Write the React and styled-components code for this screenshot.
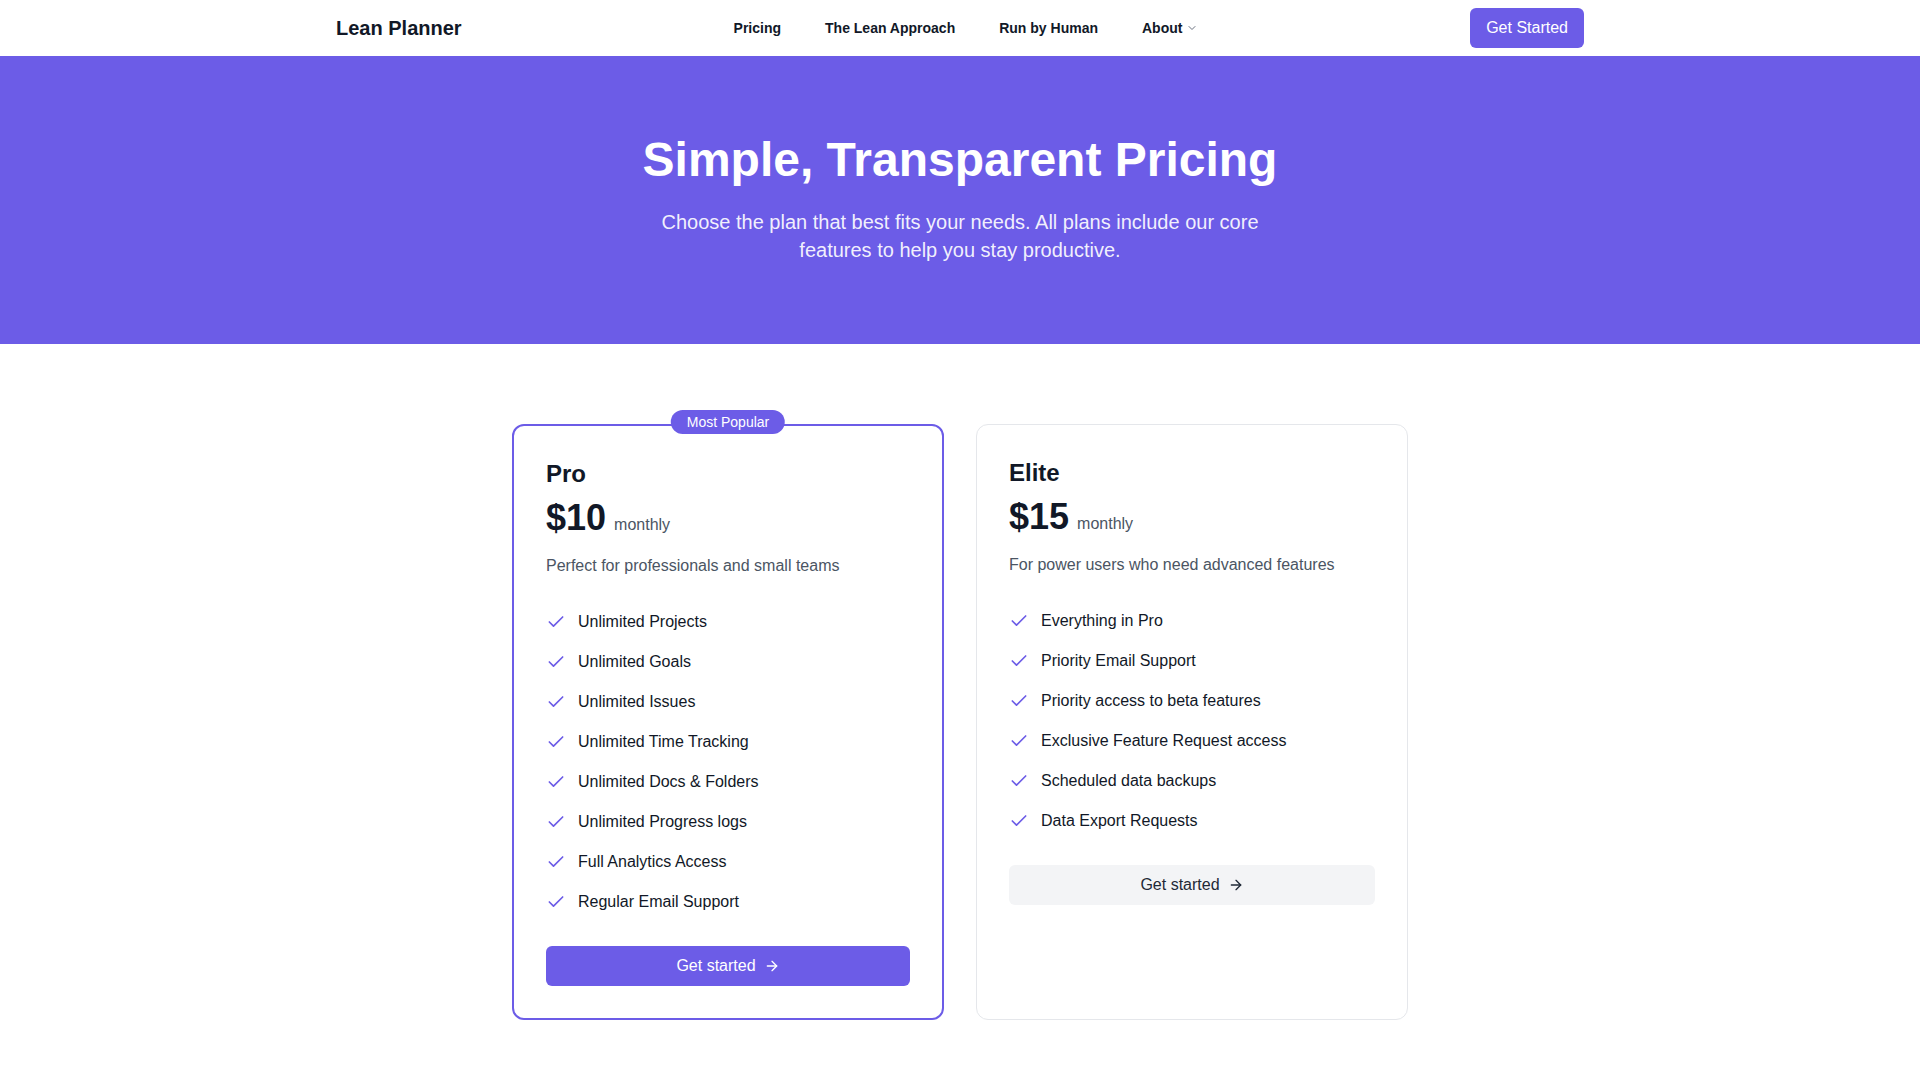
import React from 'react';
import styled, { createGlobalStyle } from 'styled-components';
import { Check, ArrowRight, ChevronDown } from 'lucide-react';

const PURPLE = '#6c5ce7';

const GlobalStyle = createGlobalStyle`
  body {
    margin: 0;
    font-family: "Liberation Sans", Arial, sans-serif;
    background: #fff;
    color: #111827;
  }
  * {
    box-sizing: border-box;
  }
`;

const Nav = styled.nav`
  background: #fff;
  height: 56px;
`;
const NavInner = styled.div`
  max-width: 1280px;
  height: 100%;
  margin: 0 auto;
  padding: 0 16px;
  display: grid;
  grid-template-columns: 1fr auto 1fr;
  align-items: center;
`;
const Logo = styled.a`
  font-size: 20px;
  font-weight: 700;
  color: #111827;
  text-decoration: none;
`;
const NavLinks = styled.div`
  display: flex;
  align-items: center;
  gap: 44px;
  padding-left: 12px;
  > a {
    display: flex;
    align-items: center;
    gap: 4px;
    font-size: 14px;
    font-weight: 600;
    color: #111827;
    text-decoration: none;
  }
`;
const NavButton = styled.a`
  justify-self: end;
  display: inline-flex;
  align-items: center;
  height: 40px;
  padding: 0 16px;
  border-radius: 6px;
  background: ${PURPLE};
  color: #fff;
  font-size: 16px;
  text-decoration: none;
`;

const Hero = styled.section`
  background: ${PURPLE};
  padding: 80px 16px;
  text-align: center;
  color: #fff;
  > h1 {
    margin: 0;
    font-size: 48px;
    line-height: 48px;
    font-weight: 700;
  }
  > p {
    max-width: 672px;
    margin: 24px auto 0;
    font-size: 20px;
    line-height: 28px;
    color: rgba(255, 255, 255, 0.92);
  }
`;

const Plans = styled.section`
  padding: 80px 16px;
`;
const PlanGrid = styled.div`
  max-width: 896px;
  margin: 0 auto;
  display: grid;
  grid-template-columns: 1fr 1fr;
  gap: 32px;
`;
const Card = styled.div`
  position: relative;
  display: flex;
  flex-direction: column;
  padding: 32px;
  border-radius: 12px;
  background: #fff;
  border: ${(p) => (p.$featured ? `2px solid ${PURPLE}` : '1px solid #e5e7eb')};
`;
const Badge = styled.span`
  position: absolute;
  top: -16px;
  left: 50%;
  transform: translateX(-50%);
  padding: 2px 16px;
  border-radius: 9999px;
  background: ${PURPLE};
  color: #fff;
  font-size: 14px;
  line-height: 20px;
  white-space: nowrap;
`;
const PlanName = styled.h3`
  margin: 0 0 8px;
  font-size: 24px;
  line-height: 32px;
  font-weight: 700;
  color: #111827;
`;
const PriceRow = styled.div`
  display: flex;
  align-items: baseline;
  gap: 8px;
  > strong {
    font-size: 36px;
    line-height: 40px;
    font-weight: 700;
    color: #111827;
  }
  > span {
    font-size: 16px;
    color: #4b5563;
  }
`;
const Description = styled.p`
  margin: 16px 0 0;
  font-size: 16px;
  line-height: 24px;
  color: #4b5563;
`;
const Features = styled.ul`
  list-style: none;
  margin: 32px 0 0;
  padding: 0;
  display: flex;
  flex-direction: column;
  gap: 16px;
`;
const Feature = styled.li`
  display: flex;
  align-items: center;
  gap: 12px;
  font-size: 16px;
  line-height: 24px;
  color: #111827;
  > svg {
    flex-shrink: 0;
    color: ${PURPLE};
  }
`;
const CardButton = styled.a`
  margin-top: 32px;
  height: 40px;
  width: 100%;
  display: flex;
  align-items: center;
  justify-content: center;
  gap: 8px;
  border-radius: 6px;
  font-size: 16px;
  text-decoration: none;
  background: ${(p) => (p.$primary ? PURPLE : '#f3f4f6')};
  color: ${(p) => (p.$primary ? '#fff' : '#1f2937')};
`;

const plans = [
  {
    name: 'Pro',
    price: '$10',
    description: 'Perfect for professionals and small teams',
    featured: true,
    features: [
      'Unlimited Projects',
      'Unlimited Goals',
      'Unlimited Issues',
      'Unlimited Time Tracking',
      'Unlimited Docs & Folders',
      'Unlimited Progress logs',
      'Full Analytics Access',
      'Regular Email Support',
    ],
  },
  {
    name: 'Elite',
    price: '$15',
    description: 'For power users who need advanced features',
    featured: false,
    features: [
      'Everything in Pro',
      'Priority Email Support',
      'Priority access to beta features',
      'Exclusive Feature Request access',
      'Scheduled data backups',
      'Data Export Requests',
    ],
  },
];

const App = () => (
  <>
    <GlobalStyle />
    <Nav>
      <NavInner>
        <Logo href="/">Lean Planner</Logo>
        <NavLinks>
          <a href="/">Pricing</a>
          <a href="/">The Lean Approach</a>
          <a href="/">Run by Human</a>
          <a href="/">
            About
            <ChevronDown size={12} color="#6b7280" />
          </a>
        </NavLinks>
        <NavButton href="/">Get Started</NavButton>
      </NavInner>
    </Nav>
    <Hero>
      <h1>Simple, Transparent Pricing</h1>
      <p>
        Choose the plan that best fits your needs. All plans include our core features to help you
        stay productive.
      </p>
    </Hero>
    <Plans>
      <PlanGrid>
        {plans.map((plan) => (
          <Card key={plan.name} $featured={plan.featured}>
            {plan.featured && <Badge>Most Popular</Badge>}
            <PlanName>{plan.name}</PlanName>
            <PriceRow>
              <strong>{plan.price}</strong>
              <span>monthly</span>
            </PriceRow>
            <Description>{plan.description}</Description>
            <Features>
              {plan.features.map((f) => (
                <Feature key={f}>
                  <Check size={20} strokeWidth={2} />
                  {f}
                </Feature>
              ))}
            </Features>
            <CardButton href="/" $primary={plan.featured}>
              Get started
              <ArrowRight size={16} />
            </CardButton>
          </Card>
        ))}
      </PlanGrid>
    </Plans>
  </>
);

export default App;
